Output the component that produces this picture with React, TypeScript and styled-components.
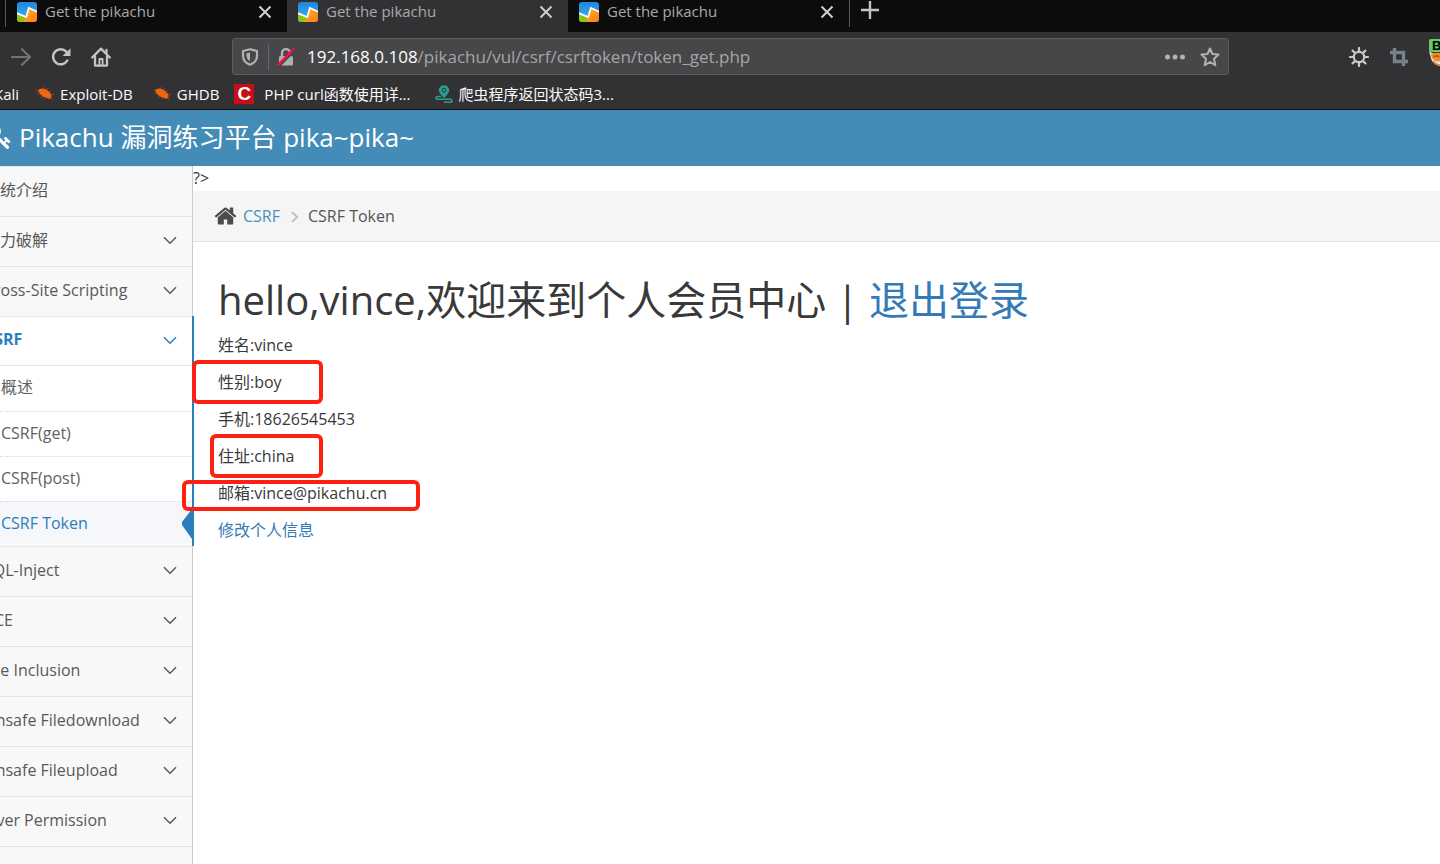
import React from "react";
import styled, { createGlobalStyle } from "styled-components";

const GlobalStyle = createGlobalStyle`
  *, *::before, *::after { box-sizing: border-box; }
  body {
    margin: 0;
    background: #fff;
    color: #393939;
    font-family: "Open Sans", "Noto Sans CJK SC", sans-serif;
    font-size: 16px;
  }
  a { color: inherit; text-decoration: none; }
  button { border: 0; padding: 0; margin: 0; background: none; color: inherit; font: inherit; cursor: pointer; }
  svg { display: block; flex: none; }
  h1, p, ul { margin: 0; padding: 0; }
  ul { list-style: none; }
`;

const Shell = styled.div`
  display: flex;
  flex-direction: column;
  height: 100vh;
  overflow: hidden;
`;

/* ---------- browser chrome ---------- */

const TabStrip = styled.div`
  display: flex;
  height: 32px;
  padding-left: 5px;
  background: #0c0c0d;
  color: #a9a9ab;
`;

const Separator = styled.span`
  width: 1px;
  height: 27px;
  background: #58585a;
`;

const Tab = styled.div<{ $active?: boolean }>`
  display: flex;
  align-items: center;
  width: 281px;
  padding: 0 14px 8px 11px;
  gap: 8px;
  background: ${(p) => (p.$active ? "#323234" : "transparent")};
  font-size: 15px;
`;

const TabTitle = styled.span`
  flex: 1;
  padding-bottom: 2px;
  line-height: 22px;
`;

const IconButton = styled.button<{ $w?: number }>`
  display: flex;
  align-items: center;
  justify-content: center;
  flex: none;
  width: ${(p) => p.$w ?? 40}px;
  height: 100%;
`;

const NewTab = styled(IconButton)`
  padding-bottom: 12px;
`;

const Toolbar = styled.div`
  display: flex;
  align-items: center;
  height: 49px;
  padding: 0 0 0 1px;
  background: #323234;
  color: #c5c5c6;
`;

const UrlBar = styled.div`
  display: flex;
  align-items: center;
  flex: 1;
  height: 37px;
  margin: 0 110px 0 111px;
  padding-right: 1px;
  border: 1px solid #5c5c5e;
  border-radius: 3px;
  background: #474749;
  color: #b1b1b3;
`;

const UrlDivider = styled.span`
  width: 1px;
  height: 26px;
  background: #636878;
`;

const UrlText = styled.div`
  flex: 1;
  padding-left: 4px;
  font-size: 17px;
  line-height: 24px;
  white-space: nowrap;
  color: #a5a5a7;
`;

const UrlHost = styled.span`
  color: #fff;
`;

const Extension = styled.button`
  position: relative;
  flex: none;
  width: 21px;
  height: 40px;
  overflow: hidden;
`;

const ExtensionBadge = styled.span`
  position: absolute;
  left: 10px;
  top: 2px;
  width: 24px;
  height: 13px;
  padding-left: 3px;
  border-radius: 2px;
  background: #63cd63;
  color: #000;
  font: bold 13px/13px "Liberation Sans", sans-serif;
  text-align: left;
`;

const Bookmarks = styled.nav`
  display: flex;
  align-items: center;
  height: 29px;
  padding-bottom: 2px;
  border-bottom: 1px solid #0c0c0d;
  background: #323234;
  color: #fbfbfb;
  font-size: 15px;
  white-space: nowrap;
`;

const Bookmark = styled.a<{ $gap?: number; $after?: number }>`
  display: flex;
  align-items: center;
  gap: ${(p) => p.$gap ?? 6}px;
  margin-right: ${(p) => p.$after ?? 20}px;
  line-height: 24px;
`;

const FirstBookmark = styled(Bookmark)`
  margin-left: -6px;
`;

const RedLogo = styled.span`
  display: flex;
  align-items: center;
  justify-content: center;
  width: 20px;
  height: 20px;
  background: #ca0c16;
  color: #fff;
  font: bold 19px/20px "Liberation Sans", sans-serif;
`;

/* ---------- page ---------- */

const SiteHeader = styled.header`
  display: flex;
  align-items: center;
  height: 56px;
  padding-bottom: 2px;
  flex: none;
  background: #448cb8;
  color: #fff;
`;

const Brand = styled.a`
  display: flex;
  align-items: center;
  gap: 7px;
  margin-left: -14px;
  font-size: 26px;
  line-height: 40px;
  white-space: nowrap;
`;

const Body = styled.div`
  display: flex;
  flex: 1;
  min-height: 0;
`;

const Sidebar = styled.nav`
  position: relative;
  z-index: 1;
  flex: none;
  width: 193px;
  border-right: 1px solid #ccc;
  background: #f8f8f8;
  color: #585858;
`;

const Group = styled.li<{ $open?: boolean }>`
  position: relative;
  border-top: 1px solid #e5e5e5;
  background: ${(p) => (p.$open ? "#fff" : "transparent")};

  &::after {
    content: "";
    display: ${(p) => (p.$open ? "block" : "none")};
    position: absolute;
    top: -1px;
    right: -2px;
    bottom: 0;
    width: 2px;
    background: #2b7dbc;
  }
`;

const GroupLink = styled.a<{ $open?: boolean }>`
  display: flex;
  align-items: center;
  justify-content: space-between;
  height: ${(p) => (p.$open ? 48 : 49)}px;
  margin-left: -16px;
  padding-right: 15px;
  white-space: nowrap;
  color: ${(p) => (p.$open ? "#2b7dbc" : "inherit")};
  font-weight: ${(p) => (p.$open ? 700 : 400)};
  line-height: 24px;

  svg { margin-bottom: 2px; }
`;

const GroupLabel = styled.span`
  padding-bottom: 4px;
`;

const SubList = styled.ul`
  border-top: 1px solid #e5e5e5;
`;

const SubItem = styled.li<{ $active?: boolean }>`
  position: relative;
  display: flex;
  align-items: center;
  height: 45px;
  padding: 0 0 3px 1px;
  line-height: 24px;
  background: ${(p) => (p.$active ? "#f5f7fb" : "#fff")};
  color: ${(p) => (p.$active ? "#2b7dbc" : "#616161")};

  & + & { border-top: 1px dotted #d8d8d8; }
`;

const ActiveArrow = styled.svg`
  position: absolute;
  right: 0;
  top: 7px;
`;

const Main = styled.main`
  position: relative;
  z-index: 2;
  flex: 1;
  min-width: 0;
`;

const Stray = styled.div`
  height: 25px;
  line-height: 24px;
`;

const Breadcrumb = styled.nav`
  display: flex;
  align-items: center;
  height: 51px;
  padding: 0 21px;
  border-bottom: 1px solid #e5e5e5;
  background: #f5f5f5;
  color: #555;
`;

const CrumbLink = styled.a`
  margin-left: 6px;
  color: #4c8fbd;
`;

const CrumbArrow = styled.svg`
  margin: 2px 10px 0 11px;
`;

const Content = styled.section`
  padding: 34px 25px;
`;

const Heading = styled.h1`
  font-size: 40px;
  font-weight: 400;
  line-height: 48px;
  margin-bottom: 3px;
`;

const Accent = styled.a`
  color: #337ab7;
`;

const Detail = styled.p`
  position: relative;
  line-height: 37px;
`;

const Mark = styled.span<{ $x: number; $y: number; $w: number; $h: number }>`
  position: absolute;
  left: ${(p) => p.$x}px;
  top: ${(p) => p.$y}px;
  width: ${(p) => p.$w}px;
  height: ${(p) => p.$h}px;
  border: 4px solid #ff2012;
  border-radius: 6px;
  pointer-events: none;
`;

/* ---------- icons ---------- */

const Favicon = ({ id }: { id: string }) => (
  <svg width="20" height="20" viewBox="0 0 20 20" aria-hidden="true">
    <defs>
      <clipPath id={id + "c"}><rect width="20" height="20" rx="3" /></clipPath>
      <linearGradient id={id + "b"} x1="0" y1="0" x2="0" y2="1">
        <stop offset="0" stopColor="#1d86dd" /><stop offset="1" stopColor="#46b4f4" />
      </linearGradient>
      <linearGradient id={id + "o"} x1="0" y1="0" x2="1" y2="1">
        <stop offset="0" stopColor="#ffb52e" /><stop offset="1" stopColor="#ff7a12" />
      </linearGradient>
    </defs>
    <g clipPath={`url(#${id}c)`}>
      <rect width="20" height="20" fill={`url(#${id}b)`} />
      <path d="M0 11 L9 15 L7.500 20 H0Z" fill="#8fc412" />
      <path d="M12 6 L20 10 V20 H6.500 L9.500 14.500Z" fill={`url(#${id}o)`} />
      <path d="M-1 10.800 L9.200 15 L11.800 6 L21 10" fill="none" stroke="#fff" strokeWidth="1.700" />
    </g>
  </svg>
);

const Cross = () => (
  <svg width="14" height="14" viewBox="0 0 14 14" aria-hidden="true">
    <path d="M1.500 1.500 L12.500 12.500 M12.500 1.500 L1.500 12.500" stroke="#cfcfd0" strokeWidth="2" fill="none" />
  </svg>
);

const Roach = () => (
  <svg width="18" height="16" viewBox="0 0 18 16" aria-hidden="true">
    <path d="M2 4 Q5 1.500 9 3 Q14 5 15.500 9.500 Q15.500 13 13 12.800 Q8 12 5 9 Q2.500 7 2 4Z" fill="#f26411" />
    <path d="M7 3 L9 1 M10 4 L12 2 M13 6 L15 5 M15 8.500 L18 8 M15 11.500 L16.500 14 M10 11 L9 13.500 M7 10 L4.500 12 M4 7 L1 8 M3 5 L0 4" stroke="#8a4724" strokeWidth="1" fill="none" />
  </svg>
);

const Chevron = () => (
  <svg width="14" height="9" viewBox="0 0 14 9" aria-hidden="true">
    <path d="M1 1.200 L7 7.200 L13 1.200" fill="none" stroke="currentColor" strokeWidth="1.500" />
  </svg>
);

/* ---------- data ---------- */

const before = [
  { label: "系统介绍", leaf: true },
  { label: "暴力破解" },
  { label: "Cross-Site Scripting" },
];
const after = ["SQL-Inject", "RCE", "File Inclusion", "Unsafe Filedownload", "Unsafe Fileupload", "Over Permission", "../../"];
const csrfPages = ["概述", "CSRF(get)", "CSRF(post)", "CSRF Token"];

const MenuGroup = ({ label, leaf }: { label: string; leaf?: boolean }) => (
  <Group>
    <GroupLink href="#">
      <GroupLabel>{label}</GroupLabel>
      {!leaf && <Chevron />}
    </GroupLink>
  </Group>
);

export default function App() {
  return (
    <Shell>
      <GlobalStyle />
      <TabStrip>
        <Separator />
        {[0, 1, 2].map((i) => (
          <Tab key={i} $active={i === 1}>
            <Favicon id={"fav" + i} />
            <TabTitle>Get the pikachu</TabTitle>
            <IconButton $w={16} aria-label="Close tab"><Cross /></IconButton>
          </Tab>
        ))}
        <Separator />
        <NewTab aria-label="New tab">
          <svg width="18" height="18" viewBox="0 0 18 18">
            <path d="M9 0 V18 M0 9 H18" stroke="#c5c5c6" strokeWidth="2.400" />
          </svg>
        </NewTab>
      </TabStrip>

      <Toolbar>
        <IconButton aria-label="Forward">
          <svg width="20" height="18" viewBox="0 0 20 18" fill="none" stroke="#737375" strokeWidth="2.200" strokeLinecap="round" strokeLinejoin="round">
            <path d="M1 9 H19 M11 1.200 L19 9 L11 16.800" />
          </svg>
        </IconButton>
        <IconButton aria-label="Reload">
          <svg width="20" height="20" viewBox="0 0 20 20">
            <path d="M16.300 13.500 A7.600 7.600 0 1 1 15.300 4.600" fill="none" stroke="#c5c5c6" strokeWidth="2.500" strokeLinecap="round" />
            <path d="M19.500 1.200 V9 H11.500Z" fill="#c5c5c6" />
          </svg>
        </IconButton>
        <IconButton aria-label="Home">
          <svg width="20" height="20" viewBox="0 0 20 20" fill="none" stroke="#c5c5c6" strokeWidth="2.300" strokeLinecap="round" strokeLinejoin="round">
            <path d="M1.200 10.500 L10 1.600 L18.800 10.500" />
            <path d="M4 9.500 V18.600 H16 V9.500" />
            <path d="M8.400 18 V12 H11.600 V18" strokeWidth="1.800" />
            <path d="M15.500 3 V6" />
          </svg>
        </IconButton>
        <UrlBar>
          <IconButton $w={35} aria-label="Tracking protection">
            <svg width="19" height="18" viewBox="0 0 19 18">
              <path d="M9 1.200 L16 3 V8 Q16 14 9 16.800 Q2 14 2 8 V3Z" fill="none" stroke="#b1b1b3" strokeWidth="2.200" strokeLinejoin="round" />
              <path d="M9 4.500 V13 Q5.500 11 5.500 8 V5.300Z" fill="#b1b1b3" />
            </svg>
          </IconButton>
          <UrlDivider />
          <IconButton $w={34} aria-label="Connection is not secure">
            <svg width="20" height="20" viewBox="0 0 20 20">
              <rect x="3" y="9" width="14" height="9.500" rx="1.500" fill="#b1b1b3" />
              <path d="M6 9 V6 A4 4 0 0 1 14 6 V9" fill="none" stroke="#b1b1b3" strokeWidth="2.400" />
              <path d="M3 19.500 L19.500 3" stroke="#474749" strokeWidth="2" />
              <path d="M1.500 18.500 L18 1.500" stroke="#ff0a44" strokeWidth="2.400" />
            </svg>
          </IconButton>
          <UrlText role="textbox" aria-label="Address">
            <UrlHost>192.168.0.108</UrlHost>/pikachu/vul/csrf/csrftoken/token_get.php
          </UrlText>
          <IconButton $w={35} aria-label="Page actions">
            <svg width="20" height="6" viewBox="0 0 20 6" fill="#b1b1b3">
              <circle cx="2.500" cy="3" r="2.500" /><circle cx="10" cy="3" r="2.500" /><circle cx="17.500" cy="3" r="2.500" />
            </svg>
          </IconButton>
          <IconButton $w={35} aria-label="Bookmark this page">
            <svg width="20" height="20" viewBox="0 0 20 20">
              <path d="M10 1.500 L12.500 7 L18.600 7.600 L14 11.700 L15.300 18.200 L10 15 L4.700 18.200 L6 11.700 L1.400 7.600 L7.500 7Z" fill="none" stroke="#b1b1b3" strokeWidth="2" strokeLinejoin="round" />
            </svg>
          </IconButton>
        </UrlBar>
        <IconButton aria-label="Settings">
          <svg width="20" height="20" viewBox="0 0 20 20" fill="none" stroke="#c9c9ca" strokeWidth="2.200" strokeLinecap="round">
            <circle cx="10" cy="10" r="5.200" />
            <path d="M10 1 V4 M10 16 V19 M1 10 H4 M16 10 H19 M3.600 3.600 L5.800 5.800 M14.200 14.200 L16.400 16.400 M16.400 3.600 L14.200 5.800 M5.800 14.200 L3.600 16.400" />
          </svg>
        </IconButton>
        <IconButton aria-label="Screenshot">
          <svg width="18" height="18" viewBox="0 0 18 18" fill="none" stroke="#76828e" strokeWidth="3.400">
            <path d="M0 4.500 H13.500 V18 M4.500 0 V13.500 H18" />
          </svg>
        </IconButton>
        <Extension aria-label="Proxy extension">
          <svg width="21" height="40" viewBox="0 0 21 40">
            <path d="M10 14 L13 16 H21 V29 Q15 28 12.500 23Z" fill="#e8e4e0" />
            <path d="M12 17 Q16 15 21 16 V24 Q17 26 13 21Z" fill="#f58a2a" />
            <path d="M14 24 Q17 28 21 28" fill="none" stroke="#d0853f" strokeWidth="1.500" />
            <path d="M15 19.500 Q18 18 20 20" fill="none" stroke="#9c4b12" strokeWidth="1.300" />
          </svg>
          <ExtensionBadge>B</ExtensionBadge>
        </Extension>
      </Toolbar>

      <Bookmarks>
        <FirstBookmark href="#" $after={17}>Kali</FirstBookmark>
        <Bookmark href="#"><Roach />Exploit-DB</Bookmark>
        <Bookmark href="#" $after={15}><Roach />GHDB</Bookmark>
        <Bookmark href="#" $gap={10} $after={24}><RedLogo aria-hidden="true">C</RedLogo>PHP curl函数使用详...</Bookmark>
        <Bookmark href="#">
          <svg width="18" height="18" viewBox="0 0 18 18" aria-hidden="true">
            <path d="M9 13 Q3.800 8 3.800 5.200 A5.200 5 0 0 1 14.200 5.200 Q14.200 8 9 13Z" fill="#2a9d8f" />
            <circle cx="9" cy="5.200" r="1.900" fill="none" stroke="#323234" strokeWidth="1" />
            <path d="M6 11.500 H2.500 Q1 11.500 1 13 T2.500 14.300 H15.500 Q17 14.500 17 16 T15.500 17.200 H9" fill="none" stroke="#2a9d8f" strokeWidth="1.500" />
          </svg>
          爬虫程序返回状态码3...
        </Bookmark>
      </Bookmarks>

      <SiteHeader>
        <Brand href="#">
          <svg width="26" height="26" viewBox="0 0 1792 1792" fill="#fff" aria-hidden="true">
            <path d="M832 512q0-80-56-136t-136-56-136 56-56 136q0 42 19 83-41-19-83-19-80 0-136 56t-56 136 56 136 136 56 136-56 56-136q0-42-19-83 41 19 83 19 80 0 136-56t56-136zm851 704q0 17-49 66t-66 49q-9 0-28.500-16t-36.500-33-38.500-40-24.500-26l-96 96 220 220q28 28 28 68 0 42-39 81t-81 39q-40 0-68-28l-671-671q-176 131-365 131-163 0-265.500-102.500t-102.500-265.500q0-160 95-313t248-248 313-95q163 0 265.500 102.500t102.500 265.500q0 189-131 365l355 355 96-96q-3-3-26-24.500t-40-38.500-33-36.500-16-28.500q0-17 49-66t66-49q13 0 23 10 6 6 46 44.500t82 79.500 86.500 86 73 78 28.500 41z" />
          </svg>
          Pikachu 漏洞练习平台 pika~pika~
        </Brand>
      </SiteHeader>

      <Body>
        <Sidebar>
          <ul>
            {before.map((g) => <MenuGroup key={g.label} {...g} />)}
            <Group $open>
              <GroupLink href="#" $open><GroupLabel>CSRF</GroupLabel><Chevron /></GroupLink>
              <SubList>
                {csrfPages.map((label, i) => (
                  <SubItem key={label} $active={i === 3}>
                    <a href="#">{label}</a>
                    {i === 3 && (
                      <ActiveArrow width="10" height="30" viewBox="0 0 10 30" aria-hidden="true">
                        <path d="M10 0 L0 13 V16 L10 30Z" fill="#2b7dbc" />
                      </ActiveArrow>
                    )}
                  </SubItem>
                ))}
              </SubList>
            </Group>
            {after.map((label) => <MenuGroup key={label} label={label} />)}
          </ul>
        </Sidebar>

        <Main>
          <Stray>?&gt;</Stray>
          <Breadcrumb aria-label="Breadcrumb">
            <svg width="23" height="24" viewBox="0 0 1664 1792" fill="#4c4c4c" aria-hidden="true">
              <path d="M1408 992v480q0 26-19 45t-45 19h-384v-384h-256v384h-384q-26 0-45-19t-19-45v-480q0-1 .5-3t.5-3l575-474 575 474q1 2 1 6zm223-69l-62 74q-8 9-21 11h-3q-13 0-21-7l-692-577-692 577q-12 8-24 7-13-2-21-11l-62-74q-8-10-7-23.500t11-21.500l719-599q32-26 76-26t76 26l244 204v-195q0-14 9-23t23-9h192q14 0 23 9t9 23v408l219 182q10 8 11 21.500t-7 23.500z" />
            </svg>
            <CrumbLink href="#">CSRF</CrumbLink>
            <CrumbArrow width="7" height="12" viewBox="0 0 7 12" aria-hidden="true">
              <path d="M1 1 L6 6 L1 11" fill="none" stroke="#b2b6bf" strokeWidth="1.600" />
            </CrumbArrow>
            <span>CSRF Token</span>
          </Breadcrumb>
          <Content>
            <Heading>hello,vince,欢迎来到个人会员中心 | <Accent href="#">退出登录</Accent></Heading>
            <Detail>姓名:vince</Detail>
            <Detail>性别:boy<Mark $x={-26} $y={-4} $w={131} $h={44} /></Detail>
            <Detail>手机:18626545453</Detail>
            <Detail>住址:china<Mark $x={-8} $y={-4} $w={113} $h={44} /></Detail>
            <Detail>邮箱:vince@pikachu.cn<Mark $x={-36} $y={5} $w={238} $h={31} /></Detail>
            <Detail><Accent href="#">修改个人信息</Accent></Detail>
          </Content>
        </Main>
      </Body>
    </Shell>
  );
}
